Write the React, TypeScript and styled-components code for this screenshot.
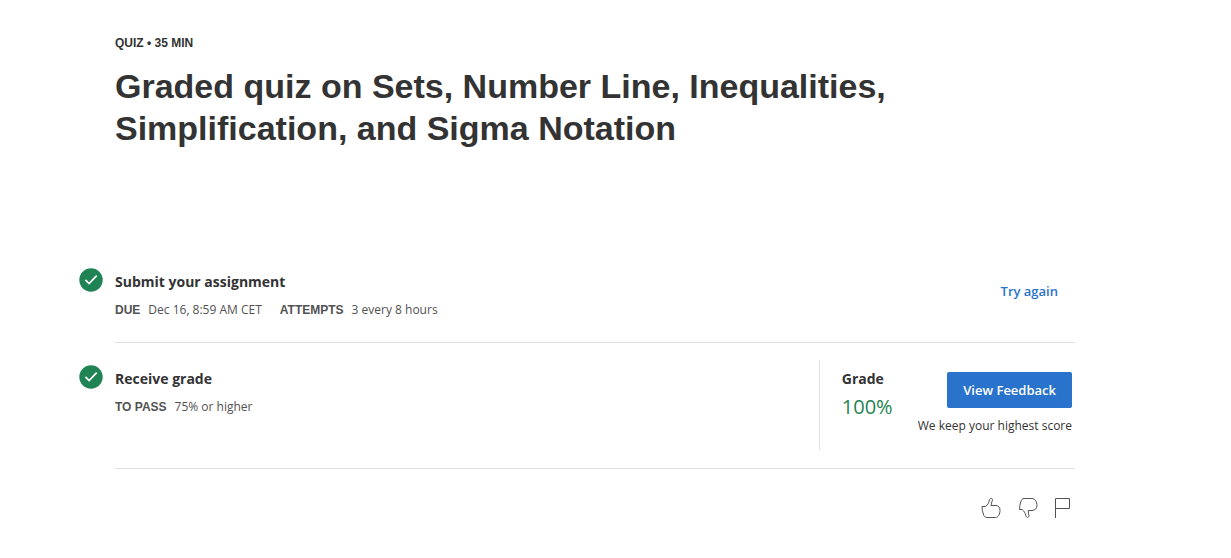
import React from "react";
import styled, { createGlobalStyle } from "styled-components";

const GlobalStyle = createGlobalStyle`
  body {
    margin: 0;
    background: #fff;
    color: #333;
    font-family: "Open Sans", "Liberation Sans", sans-serif;
    font-size: 14px;
    line-height: 20px;
  }
`;

const Page = styled.main`
  padding: 32px 76px 32px 35px;
`;

const Content = styled.div`
  max-width: 960px;
  margin: 0 auto;
  padding: 0 40px;
`;

const Header = styled.header`
  margin-bottom: 119px;
`;

const Kicker = styled.p`
  margin: 0 0 11px;
  font: 700 12px/22px "Liberation Sans", Arial, sans-serif;
`;

const Title = styled.h1`
  margin: 0;
  max-width: 840px;
  font: 700 34px/42px "Liberation Sans", Arial, sans-serif;
`;

const Step = styled.section<{ $tall?: boolean }>`
  display: flex;
  min-height: ${(p) => (p.$tall ? 90 : 60)}px;
  padding: ${(p) => (p.$tall ? "17px 0 18px" : "0 0 14px")};
  border-bottom: 1px solid #e1e1e1;
`;

const Summary = styled.div<{ $inset?: boolean }>`
  flex: 1;
  padding-top: ${(p) => (p.$inset ? 5 : 0)}px;
`;

const StepHead = styled.div`
  display: flex;
  gap: 12px;
  margin-left: -36px;
`;

const StepTitle = styled.h2`
  margin: 4px 0 8px;
  font-size: 14px;
  line-height: 20px;
  font-weight: 700;
`;

const Details = styled.dl`
  display: flex;
  gap: 18px;
  margin: 0;
  font-size: 12px;
  line-height: 20px;
  color: #525252;
`;

const Detail = styled.div`
  display: flex;
  gap: 8px;
`;

const Term = styled.dt`
  font-family: "Liberation Sans", Arial, sans-serif;
  font-weight: 700;
`;

const Value = styled.dd`
  margin: 0;
`;

const TryAgain = styled.a`
  align-self: flex-start;
  margin: 13px 17px 0 0;
  color: #2a73cc;
  font-size: 13px;
  font-weight: 600;
  text-decoration: none;
`;

const GradePanel = styled.div`
  display: flex;
  min-height: 90px;
  box-sizing: border-box;
  padding: 9px 3px 0 22px;
  border-left: 1px solid #e1e1e1;
`;

const Grade = styled.div`
  width: 76px;
`;

const GradeLabel = styled.h3`
  margin: 0 0 4px;
  font-size: 14px;
  line-height: 20px;
  font-weight: 700;
`;

const GradeValue = styled.p`
  margin: 0;
  color: #1f8354;
  font-size: 20px;
  line-height: 28px;
`;

const Feedback = styled.div`
  display: flex;
  flex-direction: column;
  align-items: flex-end;
  gap: 8px;
  padding-top: 3px;
`;

const FeedbackButton = styled.button`
  height: 36px;
  padding: 0 16px;
  border: 0;
  border-radius: 2px;
  background: #2a73cc;
  color: #fff;
  font: 600 13px/20px "Open Sans", sans-serif;
`;

const Note = styled.p`
  margin: 0;
  font-size: 12px;
  line-height: 20px;
`;

const Reactions = styled.footer`
  display: flex;
  justify-content: flex-end;
  gap: 12px;
  padding: 27px 0 0;
`;

const IconButton = styled.button`
  display: flex;
  padding: 0;
  border: 0;
  background: none;
  color: #525252;
`;

const Check = () => (
  <svg width="24" height="24" viewBox="0 0 24 24" role="img" aria-label="Completed">
    <circle cx="12" cy="12" r="11.7" fill="#1f8354" />
    <path d="M6.4 11.8l3.7 3.8 7.6-8" fill="none" stroke="#fff" strokeWidth="1.7" />
  </svg>
);

const Icon = ({ d }: { d: string }) => (
  <svg width="24" height="24" viewBox="0 0 24 24" fill="none" stroke="currentColor" aria-hidden="true">
    <path d={d} />
  </svg>
);

const THUMB_UP =
  "M3 10.5H6.6C8.6 9 9.8 7 10.4 4.2C10.7 2.8 11.4 2.2 12.2 2.3C13.4 2.5 13.7 3.6 13.3 4.8C12.9 6.2 12 7.6 12 9.5H17C19.4 9.5 21 11.5 21 14.2C21 18 19.4 21.5 16.5 21.5H8C5.8 21.5 4.9 20 4.3 18C3.5 15.6 3 13 3 10.5Z";

const THUMB_DOWN =
  "M4.5 13.5H7.2C9 15 10.2 17 10.9 19.6C11.3 20.9 12 21.6 12.7 21.5C13.8 21.3 14.1 20.3 13.9 19.2C13.6 17.8 13.2 16.4 13.2 14.5H17C20 14.3 22 12.4 22 9.6C22 6 20 2.5 17 2.5H9.2C7.2 2.5 6.3 4 5.7 6C4.9 8.4 4.5 11 4.5 13.5Z";

const FLAG = "M4.5 22V2.5H18.5V12.5H4.5";

export default function App() {
  return (
    <>
      <GlobalStyle />
      <Page>
        <Content>
          <Header>
            <Kicker>QUIZ • 35 MIN</Kicker>
            <Title>Graded quiz on Sets, Number Line, Inequalities, Simplification, and Sigma Notation</Title>
          </Header>
          <Step>
            <Summary>
              <StepHead>
                <Check />
                <StepTitle>Submit your assignment</StepTitle>
              </StepHead>
              <Details>
                <Detail>
                  <Term>DUE</Term>
                  <Value>Dec 16, 8:59 AM CET</Value>
                </Detail>
                <Detail>
                  <Term>ATTEMPTS</Term>
                  <Value>3 every 8 hours</Value>
                </Detail>
              </Details>
            </Summary>
            <TryAgain href="#">Try again</TryAgain>
          </Step>
          <Step $tall>
            <Summary $inset>
              <StepHead>
                <Check />
                <StepTitle>Receive grade</StepTitle>
              </StepHead>
              <Details>
                <Detail>
                  <Term>TO PASS</Term>
                  <Value>75% or higher</Value>
                </Detail>
              </Details>
            </Summary>
            <GradePanel>
              <Grade>
                <GradeLabel>Grade</GradeLabel>
                <GradeValue>100%</GradeValue>
              </Grade>
              <Feedback>
                <FeedbackButton type="button">View Feedback</FeedbackButton>
                <Note>We keep your highest score</Note>
              </Feedback>
            </GradePanel>
          </Step>
          <Reactions>
            <IconButton type="button" aria-label="Like">
              <Icon d={THUMB_UP} />
            </IconButton>
            <IconButton type="button" aria-label="Dislike">
              <Icon d={THUMB_DOWN} />
            </IconButton>
            <IconButton type="button" aria-label="Report an issue">
              <Icon d={FLAG} />
            </IconButton>
          </Reactions>
        </Content>
      </Page>
    </>
  );
}
